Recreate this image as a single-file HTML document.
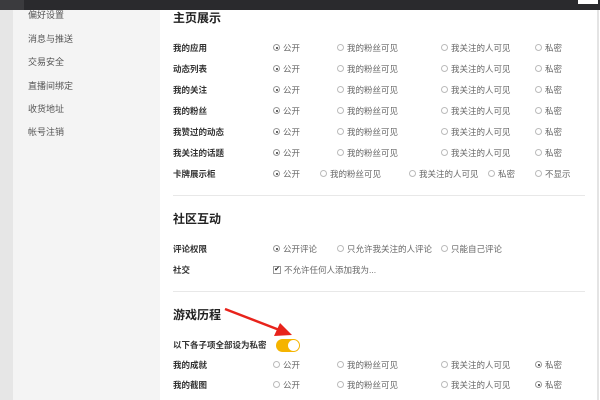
<!DOCTYPE html>
<html><head><meta charset="utf-8"><style>
*{margin:0;padding:0;box-sizing:border-box}
body{width:600px;height:400px;overflow:hidden;background:#fff;position:relative;font-family:"Liberation Sans","Noto Sans CJK SC",sans-serif;color:#333}
.a{position:absolute;white-space:nowrap}
.top{left:0;top:0;width:600px;height:10px;background:#2a2a2d}
.s{font-size:9px;color:#555;line-height:12px}
.h{font-size:12px;font-weight:bold;color:#222;line-height:14px}
.l{font-size:8.5px;color:#333;line-height:12px;font-weight:bold}
.o{font-size:8.5px;color:#666;line-height:12px}
.r{position:absolute;width:7px;height:7px;border:1px solid #bbb;border-radius:50%;background:#fff}
.r.on{border-color:#999}
.r.on::after{content:"";position:absolute;left:1.5px;top:1.5px;width:2px;height:2px;background:#333;border-radius:50%}
.hr{position:absolute;left:173px;width:412px;height:1px;background:#e8e8e8}
</style></head><body>
<div class="a" style="left:0;top:0;width:13px;height:400px;background:#e6e6e6"></div>
<div class="a" style="left:13px;top:0;width:147px;height:400px;background:#f4f4f4"></div>
<div class="a" style="left:597px;top:0;width:2px;height:400px;background:#e4e4e4"></div>
<div class="a top"></div>
<div class="a" style="left:0;top:0;width:24px;height:10px;background:#3b3b3e"></div>
<div class="a" style="left:578px;top:0;width:20px;height:4px;background:#fff"></div>

<div class="a s" style="left:28px;top:9px">偏好设置</div>
<div class="a s" style="left:28px;top:33px">消息与推送</div>
<div class="a s" style="left:28px;top:56px">交易安全</div>
<div class="a s" style="left:28px;top:80px">直播间绑定</div>
<div class="a s" style="left:28px;top:103px">收货地址</div>
<div class="a s" style="left:28px;top:126px">帐号注销</div>

<div class="a h" style="left:173px;top:11px">主页展示</div>
<div id="rows"></div>
<div class="hr" style="top:195px"></div>
<div class="a h" style="left:173px;top:212px">社区互动</div>
<div class="a l" style="left:173px;top:243px">评论权限</div>
<div class="r on" style="left:273px;top:245px"></div><div class="a o" style="left:283px;top:243px">公开评论</div>
<div class="r" style="left:337px;top:245px"></div><div class="a o" style="left:347px;top:243px">只允许我关注的人评论</div>
<div class="r" style="left:441px;top:245px"></div><div class="a o" style="left:451px;top:243px">只能自己评论</div>
<div class="a l" style="left:173px;top:264px">社交</div>
<div class="a" style="left:273px;top:266px;width:8px;height:8px;border:1px solid #999;background:#fff;font-size:7px;line-height:6px;text-align:center;color:#222">✔</div>
<div class="a o" style="left:284px;top:264px">不允许任何人添加我为...</div>
<div class="hr" style="top:291px"></div>
<div class="a h" style="left:173px;top:308px">游戏历程</div>
<div class="a l" style="left:173px;top:339px">以下各子项全部设为私密</div>
<div class="a" style="left:276px;top:339px;width:24px;height:13px;border-radius:7px;background:#f5b400"></div>
<div class="a" style="left:288px;top:340px;width:11px;height:11px;border-radius:50%;background:#fff"></div>
<svg class="a" style="left:220px;top:303px" width="80" height="36"><line x1="5" y1="6" x2="62" y2="28" stroke="#e8231b" stroke-width="2.5"/><polygon points="72,32 54,33 60,20" fill="#e8231b"/></svg>
<div id="rows2"></div>
<script>
var R=[["我的应用",48],["动态列表",69],["我的关注",90],["我的粉丝",111],["我赞过的动态",132],["我关注的话题",153]];
var h="";
function row(lbl,y,sel){
 h+='<div class="a l" style="left:173px;top:'+(y-6)+'px">'+lbl+'</div>';
 var c=[[273,"公开"],[337,"我的粉丝可见"],[441,"我关注的人可见"],[535,"私密"]];
 c.forEach(function(e,i){h+='<div class="r'+(i==sel?' on':'')+'" style="left:'+e[0]+'px;top:'+(y-4)+'px"></div><div class="a o" style="left:'+(e[0]+10)+'px;top:'+(y-6)+'px">'+e[1]+'</div>';});
}
R.forEach(function(r){row(r[0],r[1],0)});
h+='<div class="a l" style="left:173px;top:168px">卡牌展示柜</div>';
[[273,"公开",1],[320,"我的粉丝可见"],[409,"我关注的人可见"],[488,"私密"],[535,"不显示"]].forEach(function(e){h+='<div class="r'+(e[2]?' on':'')+'" style="left:'+e[0]+'px;top:170px"></div><div class="a o" style="left:'+(e[0]+10)+'px;top:168px">'+e[1]+'</div>';});
row("我的成就",365,3);row("我的截图",385,3);
document.getElementById("rows").innerHTML=h;
</script>
</body></html>
